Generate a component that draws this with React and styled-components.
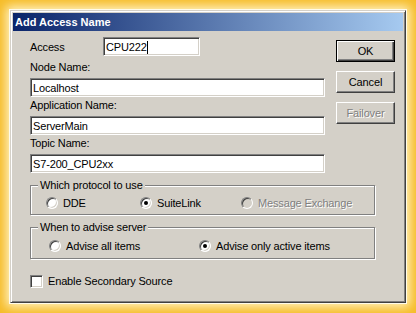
import React from "react";
import styled, { createGlobalStyle, css } from "styled-components";

const Global = createGlobalStyle`
  html, body { margin: 0; padding: 0; background: #f7bf2c; }
  body { font-family: "Liberation Sans", Arial, sans-serif; font-size: 11px; color: #000; letter-spacing: -0.15px; }
`;

const Page = styled.div`
  width: 416px;
  height: 313px;
  box-sizing: border-box;
  padding: 10px;
  background: #f6bc28;
  overflow: hidden;
`;

const Dialog = styled.div`
  width: 396px;
  height: 293px;
  box-sizing: border-box;
  background: #d4d0c8;
  border: 1px solid;
  border-color: #d4d0c8 #404040 #404040 #d4d0c8;
  box-shadow: inset 1px 1px 0 #fff, inset -1px -1px 0 #808080, 0 0 0 1px #fffbea, 0 0 10px 4px #fff3c6;
  padding: 2px;
  display: flex;
  flex-direction: column;
`;

const TitleBar = styled.div`
  height: 18px;
  line-height: 18px;
  padding-left: 2px;
  background: linear-gradient(to right, #0a246a, #a6caf0);
  color: #fff;
  font-weight: bold;
  font-size: 11px;
  letter-spacing: 0;
`;

const Body = styled.div`
  padding: 6px 0 0 17px;
  display: flex;
  flex-direction: column;
`;

const TopSection = styled.div`
  display: flex;
  align-items: flex-start;
`;

const Fields = styled.div`
  width: 296px;
  display: flex;
  flex-direction: column;
`;

const AccessRow = styled.div`
  display: flex;
  align-items: center;
  height: 19px;
  margin-bottom: 4px;
`;

const AccessLabel = styled.span`
  width: 73px;
`;

const FieldLabel = styled.div`
  height: 14px;
  line-height: 14px;
  margin-top: ${(p) => (p.$first ? 0 : 1)}px;
  margin-bottom: 4px;
`;

const TextBox = styled.div`
  box-sizing: border-box;
  width: ${(p) => p.$w || 295}px;
  height: 19px;
  line-height: 15px;
  background: #fff;
  border: 1px solid;
  border-color: #808080 #fff #fff #808080;
  box-shadow: inset 1px 1px 0 #404040, inset -1px -1px 0 #d4d0c8;
  padding-top: 1px;
  padding-left: 2px;
  white-space: nowrap;
  display: flex;
  align-items: center;
`;

const Caret = styled.span`
  display: inline-block;
  width: 1px;
  height: 13px;
  background: #000;
`;

const Buttons = styled.div`
  margin-left: 10px;
  padding-top: 3px;
  display: flex;
  flex-direction: column;
  gap: 9px;
`;

const Button = styled.div`
  box-sizing: border-box;
  width: 59px;
  height: 22px;
  display: flex;
  align-items: center;
  justify-content: center;
  background: #d4d0c8;
  border: 1px solid;
  border-color: #fff #404040 #404040 #fff;
  box-shadow: inset -1px -1px 0 #808080, inset 1px 1px 0 #d4d0c8;
  ${(p) =>
    p.$default &&
    css`
      border: 1px solid #000;
      box-shadow: inset 1px 1px 0 #fff, inset -1px -1px 0 #404040, inset -2px -2px 0 #808080;
    `}
  ${(p) =>
    p.$disabled &&
    css`
      color: #808080;
      text-shadow: 1px 1px 0 #fff;
    `}
`;

const Group = styled.fieldset`
  box-sizing: border-box;
  width: 345px;
  margin: 5px 0 0 0;
  padding: ${(p) => p.$pt}px 0 ${(p) => p.$pb}px 7px;
  border: 1px solid #808080;
  box-shadow: inset 1px 1px 0 #fff, 1px 1px 0 #fff;
  min-width: 0;
`;

const Legend = styled.legend`
  padding: 0 2px;
  line-height: 14px;
  height: 14px;
  background: #d4d0c8;
`;

const RadioRow = styled.div`
  display: grid;
  grid-template-columns: ${(p) => p.$cols};
  padding-left: ${(p) => p.$pl}px;
  height: 14px;
  align-items: center;
`;

const Option = styled.div`
  display: flex;
  align-items: center;
  gap: 5px;
  white-space: nowrap;
  ${(p) =>
    p.$disabled &&
    css`
      color: #808080;
      text-shadow: 1px 1px 0 #fff;
    `}
`;

const Radio = styled.span`
  box-sizing: border-box;
  width: 12px;
  height: 12px;
  border-radius: 50%;
  border: 1px solid;
  border-color: #808080 #fff #fff #808080;
  box-shadow: inset 1px 1px 0 #404040, inset -1px -1px 0 #d4d0c8;
  background: ${(p) => (p.$disabled ? "#d4d0c8" : "#fff")};
  display: flex;
  align-items: center;
  justify-content: center;
  flex: none;
  &::after {
    content: "";
    width: 4px;
    height: 4px;
    border-radius: 50%;
    background: #000;
    display: ${(p) => (p.$checked ? "block" : "none")};
  }
`;

const CheckRow = styled.div`
  margin-top: 15px;
  height: 14px;
  display: flex;
  align-items: center;
  gap: 5px;
`;

const CheckBox = styled.span`
  box-sizing: border-box;
  width: 13px;
  height: 13px;
  background: #fff;
  border: 1px solid;
  border-color: #808080 #fff #fff #808080;
  box-shadow: inset 1px 1px 0 #404040, inset -1px -1px 0 #d4d0c8;
  flex: none;
`;

export default function App() {
  return (
    <Page>
      <Global />
      <Dialog>
        <TitleBar>Add Access Name</TitleBar>
        <Body>
          <TopSection>
            <Fields>
              <AccessRow>
                <AccessLabel>Access</AccessLabel>
                <TextBox $w={97}>
                  CPU222
                  <Caret />
                </TextBox>
              </AccessRow>
              <FieldLabel $first>Node Name:</FieldLabel>
              <TextBox>Localhost</TextBox>
              <FieldLabel>Application Name:</FieldLabel>
              <TextBox>ServerMain</TextBox>
              <FieldLabel>Topic Name:</FieldLabel>
              <TextBox>S7-200_CPU2xx</TextBox>
            </Fields>
            <Buttons>
              <Button $default>OK</Button>
              <Button>Cancel</Button>
              <Button $disabled>Failover</Button>
            </Buttons>
          </TopSection>
          <Group $pt={4} $pb={4}>
            <Legend>Which protocol to use</Legend>
            <RadioRow $pl={8} $cols="94px 101px 1fr">
              <Option>
                <Radio />
                DDE
              </Option>
              <Option>
                <Radio $checked />
                SuiteLink
              </Option>
              <Option $disabled>
                <Radio $disabled />
                Message Exchange
              </Option>
            </RadioRow>
          </Group>
          <Group $pt={5} $pb={5}>
            <Legend>When to advise server</Legend>
            <RadioRow $pl={11} $cols="150px 1fr">
              <Option>
                <Radio />
                Advise all items
              </Option>
              <Option>
                <Radio $checked />
                Advise only active items
              </Option>
            </RadioRow>
          </Group>
          <CheckRow>
            <CheckBox />
            Enable Secondary Source
          </CheckRow>
        </Body>
      </Dialog>
    </Page>
  );
}
